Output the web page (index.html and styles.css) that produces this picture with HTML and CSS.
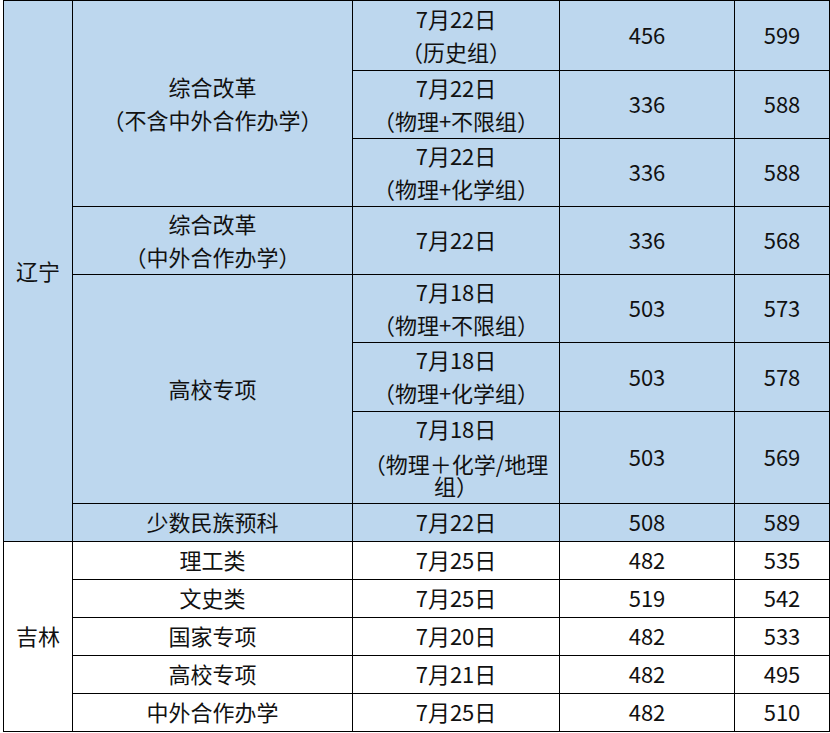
FILE: index.html
```html
<!DOCTYPE html>
<html lang="zh">
<head>
<meta charset="utf-8">
<link rel="stylesheet" href="styles.css">
</head>
<body>
<div class="sheet">
  <div class="cell blue span8">辽宁</div>
  <div class="cell blue span3"><p>综合改革</p><p>（不含中外合作办学）</p></div>
  <div class="cell blue"><p>7月22日</p><p>（历史组）</p></div>
  <div class="cell blue">456</div>
  <div class="cell blue">599</div>

  <div class="cell blue"><p>7月22日</p><p>（物理+不限组）</p></div>
  <div class="cell blue">336</div>
  <div class="cell blue">588</div>

  <div class="cell blue"><p>7月22日</p><p>（物理+化学组）</p></div>
  <div class="cell blue">336</div>
  <div class="cell blue">588</div>

  <div class="cell blue"><p>综合改革</p><p>（中外合作办学）</p></div>
  <div class="cell blue">7月22日</div>
  <div class="cell blue">336</div>
  <div class="cell blue">568</div>

  <div class="cell blue span3">高校专项</div>
  <div class="cell blue"><p>7月18日</p><p>（物理+不限组）</p></div>
  <div class="cell blue">503</div>
  <div class="cell blue">573</div>

  <div class="cell blue"><p>7月18日</p><p>（物理+化学组）</p></div>
  <div class="cell blue">503</div>
  <div class="cell blue">578</div>

  <div class="cell blue wrap"><p>7月18日</p><p>（物理＋化学/地理组）</p></div>
  <div class="cell blue">503</div>
  <div class="cell blue">569</div>

  <div class="cell blue">少数民族预科</div>
  <div class="cell blue">7月22日</div>
  <div class="cell blue">508</div>
  <div class="cell blue">589</div>

  <div class="cell span5">吉林</div>
  <div class="cell">理工类</div>
  <div class="cell">7月25日</div>
  <div class="cell">482</div>
  <div class="cell">535</div>

  <div class="cell">文史类</div>
  <div class="cell">7月25日</div>
  <div class="cell">519</div>
  <div class="cell">542</div>

  <div class="cell">国家专项</div>
  <div class="cell">7月20日</div>
  <div class="cell">482</div>
  <div class="cell">533</div>

  <div class="cell">高校专项</div>
  <div class="cell">7月21日</div>
  <div class="cell">482</div>
  <div class="cell">495</div>

  <div class="cell">中外合作办学</div>
  <div class="cell">7月25日</div>
  <div class="cell">482</div>
  <div class="cell">510</div>
</div>
</body>
</html>
```
FILE: styles.css
```css
html, body {
  margin: 0;
  padding: 0;
  background: #ffffff;
}

.sheet {
  margin-left: 3px;
  width: 827px;
  display: grid;
  grid-template-columns: 68px 279px 206px 174px 94px;
  grid-template-rows: 69px 67px 67px 67px 67px 68px 91px 37px 37px 37px 37px 37px 37px;
  gap: 1px;
  padding: 1px;
  box-sizing: border-box;
  background: #000000;
  font-family: "Noto Sans CJK SC", "Noto Sans", sans-serif;
  font-size: 22px;
  color: #111111;
  text-spacing-trim: space-all;
}

.cell {
  background: #ffffff;
  display: flex;
  flex-direction: column;
  align-items: center;
  justify-content: center;
  text-align: center;
  line-height: 22px;
  gap: 11px;
  padding-bottom: 3px;
  box-sizing: border-box;
}

.cell p {
  margin: 0;
}

.blue {
  background: #bdd7ee;
}

.span8 {
  grid-row: span 8;
}

.span5 {
  grid-row: span 5;
}

.span3 {
  grid-row: span 3;
}

.wrap {
  padding: 0 6px 3px;
  gap: 13px;
}
```
